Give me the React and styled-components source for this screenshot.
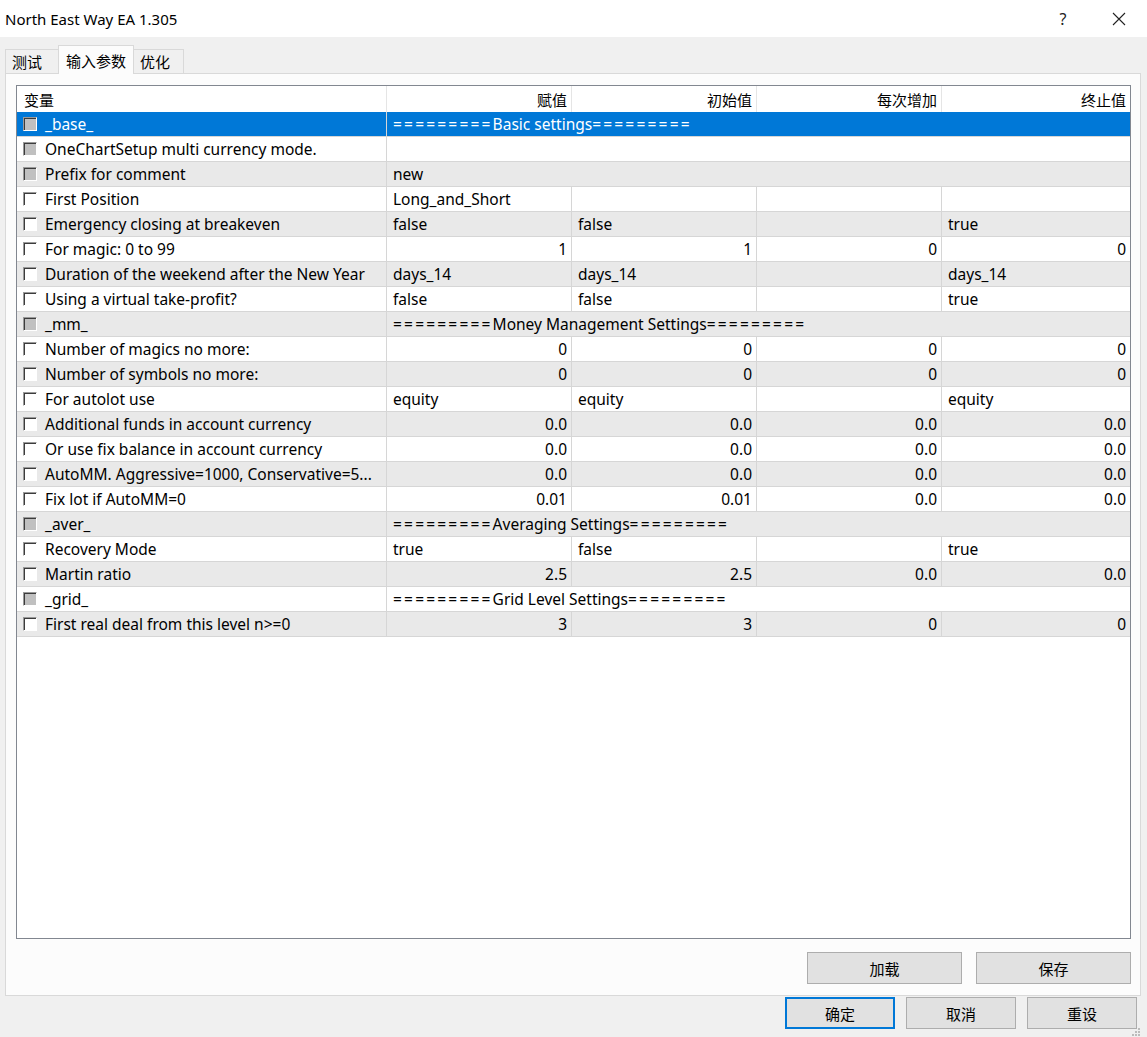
import styled, { createGlobalStyle, css } from 'styled-components'

const GlobalStyle = createGlobalStyle`
  html, body {
    margin: 0;
    padding: 0;
  }
  body {
    background: #f0f0f0;
    font-family: "Noto Sans", "Noto Sans CJK SC", sans-serif;
    font-size: 15.5px;
    color: #000;
  }
`

const Window = styled.div`
  width: 1147px;
  height: 1037px;
  display: flex;
  flex-direction: column;
  background: #f0f0f0;
  position: relative;
  overflow: hidden;
`

const TitleBar = styled.div`
  height: 37px;
  flex-shrink: 0;
  background: #fff;
  display: flex;
  align-items: center;
  padding-left: 5px;
  font-size: 15px;
`

const Title = styled.div`
  flex: 1;
`

const TitleButton = styled.div`
  width: 56px;
  height: 37px;
  display: flex;
  align-items: center;
  justify-content: center;
  font-size: 16px;
  color: #222;
`

const Body = styled.div`
  flex: 1;
  display: flex;
  flex-direction: column;
  padding: 8px 6px 0 5px;
`

const Tabs = styled.div`
  display: flex;
  align-items: flex-end;
  height: 28px;
  position: relative;
  z-index: 1;
`

const Tab = styled.div`
  width: ${(p) => p.$w}px;
  box-sizing: border-box;
  height: 24px;
  padding: 0 0 0 6px;
  display: flex;
  align-items: center;
  border: 1px solid #d9d9d9;
  border-bottom: none;
  background: #f0f0f0;
  font-family: "Noto Sans CJK SC", sans-serif;
  font-size: 15px;
  margin-left: -1px;
  &:first-child {
    margin-left: 0;
  }
  ${(p) =>
    p.$active &&
    css`
      height: 29px;
      margin-bottom: -1px;
      padding-left: 7px;
      background: #fcfcfc;
    `}
`

const Panel = styled.div`
  height: 923px;
  box-sizing: border-box;
  border: 1px solid #d9d9d9;
  background: #fcfcfc;
  padding: 11px 9px 0 10px;
  display: flex;
  flex-direction: column;
`

const Table = styled.div`
  height: 852px;
  flex-shrink: 0;
  border: 1px solid #828790;
  background: #fff;
  display: flex;
  flex-direction: column;
`

const Row = styled.div`
  display: grid;
  grid-template-columns: 370px 185px 185px 185px 1fr;
  height: 25px;
  border-bottom: 1px solid #d6d6d6;
  box-sizing: border-box;
  background: ${(p) => (p.$selected ? '#0078d7' : p.$shaded ? '#e9e9e9' : '#fff')};
  color: ${(p) => (p.$selected ? '#fff' : '#000')};
`

const HeaderRow = styled(Row)`
  height: 26px;
  border-bottom: none;
  background: #fff;
`

const HeadCell = styled.div`
  display: flex;
  align-items: center;
  justify-content: ${(p) => (p.$left ? 'flex-start' : 'flex-end')};
  padding: 0 4px 0 7px;
  font-family: "Noto Sans CJK SC", sans-serif;
  font-size: 15px;
  border-right: 1px solid #e5e5e5;
  &:last-child {
    border-right: none;
  }
`

const NameCell = styled.div`
  display: flex;
  align-items: center;
  gap: 8px;
  padding-left: 6px;
  border-right: 1px solid #d6d6d6;
  white-space: nowrap;
  overflow: hidden;
`

const Cell = styled.div`
  display: flex;
  align-items: center;
  justify-content: ${(p) => (p.$right ? 'flex-end' : 'flex-start')};
  padding: 0 4px 0 6px;
  white-space: nowrap;
  overflow: hidden;
  border-right: 1px solid #d6d6d6;
  ${(p) =>
    p.$span &&
    css`
      grid-column: 2 / -1;
      border-right: none;
    `}
  &:last-child {
    border-right: none;
  }
`

const Equals = styled.span`
  letter-spacing: 2.2px;
`

const Check = styled.span`
  width: 14px;
  height: 14px;
  flex-shrink: 0;
  box-sizing: border-box;
  border-top: 1px solid #9a9a9a;
  border-left: 1px solid #9a9a9a;
  border-right: 1px solid #fff;
  border-bottom: 1px solid #fff;
  box-shadow: inset 1px 1px 0 #3c3c3c;
  background: ${(p) => (p.$disabled ? '#c0c0c0' : '#fff')};
`

const Bottom = styled.div`
  flex: 1;
  display: flex;
  justify-content: flex-end;
  align-items: flex-start;
  gap: 14px;
  padding-top: 13px;
`

const Button = styled.button`
  width: ${(p) => p.$w || 155}px;
  height: 32px;
  box-sizing: border-box;
  background: #e1e1e1;
  border: 1px solid #adadad;
  font-family: "Noto Sans CJK SC", sans-serif;
  font-size: 15px;
  color: #000;
  padding: 0;
  ${(p) =>
    p.$default &&
    css`
      border: 2px solid #0078d7;
    `}
`

const Footer = styled.div`
  flex: 1;
  display: flex;
  justify-content: flex-end;
  align-items: flex-start;
  gap: 11px;
  padding-right: 4px;
  padding-top: 1px;
  position: relative;
`

const Grip = styled.svg`
  position: absolute;
  right: 0;
  bottom: 0;
`

const NUM = 'num'

const rows = [
  { name: '_base_', disabled: true, span: 'Basic settings', group: true, selected: true },
  { name: 'OneChartSetup multi currency mode.', disabled: true, span: '' },
  { name: 'Prefix for comment', disabled: true, span: 'new' },
  { name: 'First Position', vals: ['Long_and_Short', '', '', ''] },
  { name: 'Emergency closing at breakeven', vals: ['false', 'false', '', 'true'] },
  { name: 'For magic: 0 to 99', vals: ['1', '1', '0', '0'], type: NUM },
  { name: 'Duration of the weekend after the New Year', vals: ['days_14', 'days_14', '', 'days_14'] },
  { name: 'Using a virtual take-profit?', vals: ['false', 'false', '', 'true'] },
  { name: '_mm_', disabled: true, span: 'Money Management Settings', group: true },
  { name: 'Number of magics no more:', vals: ['0', '0', '0', '0'], type: NUM },
  { name: 'Number of symbols no more:', vals: ['0', '0', '0', '0'], type: NUM },
  { name: 'For autolot use', vals: ['equity', 'equity', '', 'equity'] },
  { name: 'Additional funds in account currency', vals: ['0.0', '0.0', '0.0', '0.0'], type: NUM },
  { name: 'Or use fix balance in account currency', vals: ['0.0', '0.0', '0.0', '0.0'], type: NUM },
  { name: 'AutoMM. Aggressive=1000, Conservative=5...', vals: ['0.0', '0.0', '0.0', '0.0'], type: NUM },
  { name: 'Fix lot if AutoMM=0', vals: ['0.01', '0.01', '0.0', '0.0'], type: NUM },
  { name: '_aver_', disabled: true, span: 'Averaging Settings', group: true },
  { name: 'Recovery Mode', vals: ['true', 'false', '', 'true'] },
  { name: 'Martin ratio', vals: ['2.5', '2.5', '0.0', '0.0'], type: NUM },
  { name: '_grid_', disabled: true, span: 'Grid Level Settings', group: true },
  { name: 'First real deal from this level n>=0', vals: ['3', '3', '0', '0'], type: NUM },
]

const EQ = '========='

function SpanValue({ row }) {
  if (!row.group) return row.span
  return (
    <>
      <Equals>{EQ}</Equals>
      {row.span}
      <Equals>{EQ}</Equals>
    </>
  )
}

export default function App() {
  return (
    <Window>
      <GlobalStyle />
      <TitleBar>
        <Title>North East Way EA 1.305</Title>
        <TitleButton>?</TitleButton>
        <TitleButton>
          <svg width="14" height="14" viewBox="0 0 14 14">
            <path d="M1 1 L13 13 M13 1 L1 13" stroke="#222" strokeWidth="1.1" />
          </svg>
        </TitleButton>
      </TitleBar>
      <Body>
        <Tabs>
          <Tab $w={54}>测试</Tab>
          <Tab $w={76} $active>输入参数</Tab>
          <Tab $w={51}>优化</Tab>
        </Tabs>
        <Panel>
          <Table>
            <HeaderRow>
              <HeadCell $left>变量</HeadCell>
              <HeadCell>赋值</HeadCell>
              <HeadCell>初始值</HeadCell>
              <HeadCell>每次增加</HeadCell>
              <HeadCell>终止值</HeadCell>
            </HeaderRow>
            {rows.map((r, i) => (
              <Row key={r.name} $selected={r.selected} $shaded={i % 2 === 0}>
                <NameCell>
                  <Check $disabled={r.disabled} />
                  {r.name}
                </NameCell>
                {r.vals ? (
                  r.vals.map((v, j) => (
                    <Cell key={j} $right={r.type === NUM}>
                      {v}
                    </Cell>
                  ))
                ) : (
                  <Cell $span>
                    <SpanValue row={r} />
                  </Cell>
                )}
              </Row>
            ))}
          </Table>
          <Bottom>
            <Button>加载</Button>
            <Button>保存</Button>
          </Bottom>
        </Panel>
        <Footer>
          <Button $w={110} $default>确定</Button>
          <Button $w={110}>取消</Button>
          <Button $w={110}>重设</Button>
          <Grip width="10" height="10" viewBox="0 0 10 10">
            <g fill="#bcbcbc">
              <rect x="7" y="1" width="2" height="2" />
              <rect x="4" y="4" width="2" height="2" />
              <rect x="7" y="4" width="2" height="2" />
              <rect x="1" y="7" width="2" height="2" />
              <rect x="4" y="7" width="2" height="2" />
              <rect x="7" y="7" width="2" height="2" />
            </g>
          </Grip>
        </Footer>
      </Body>
    </Window>
  )
}
